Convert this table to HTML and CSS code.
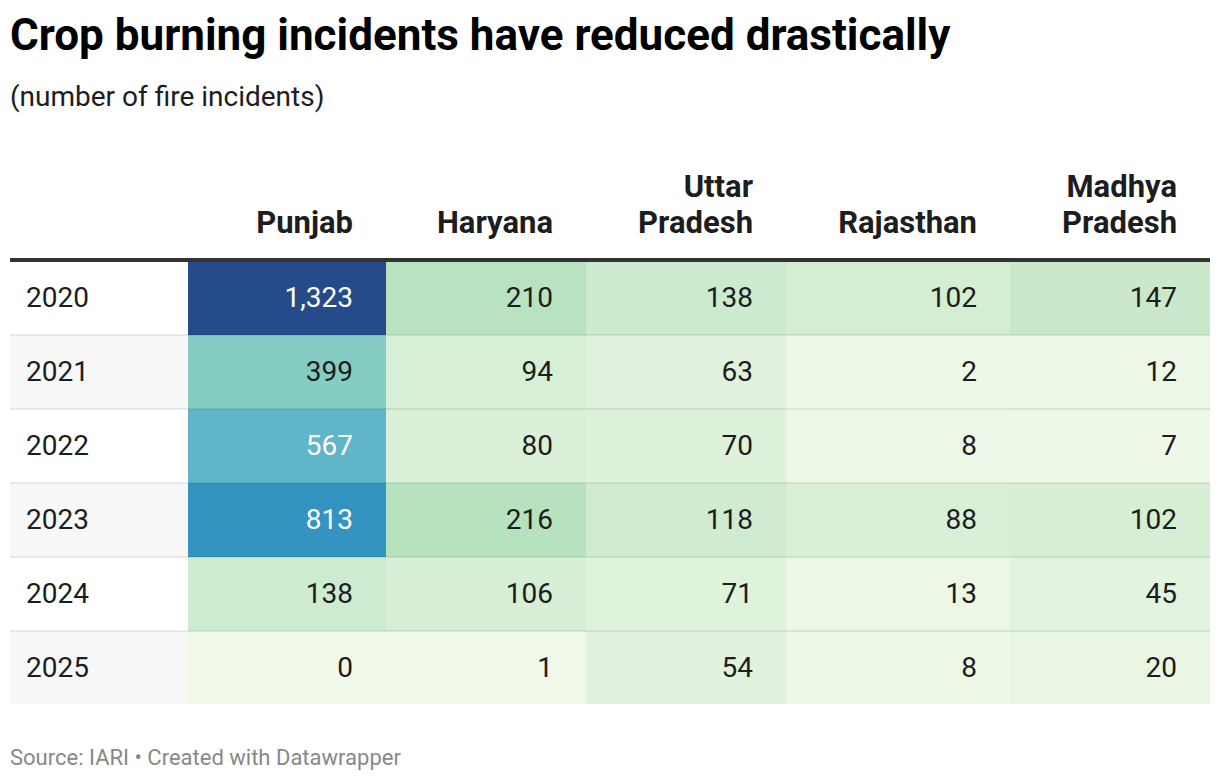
FILE: index.html
```html
<!DOCTYPE html>
<html lang="en">
<head>
<meta charset="utf-8">
<title>Crop burning incidents have reduced drastically</title>
<link rel="stylesheet" href="styles.css">
</head>
<body>
<div class="chart">
  <h1 class="title">Crop burning incidents have reduced drastically</h1>
  <p class="subtitle">(number of fire incidents)</p>
  <table class="tbl">
    <colgroup>
      <col class="c-year"><col class="c-pb"><col class="c-hr"><col class="c-up"><col class="c-rj"><col class="c-mp">
    </colgroup>
    <thead>
      <tr>
        <th class="h-year"></th>
        <th>Punjab</th>
        <th>Haryana</th>
        <th>Uttar<br>Pradesh</th>
        <th>Rajasthan</th>
        <th>Madhya<br>Pradesh</th>
      </tr>
    </thead>
    <tbody>
      <tr>
        <td class="year">2020</td>
        <td class="num light" style="background:#264b8b">1,323</td>
        <td class="num" style="background:#b9e3c0">210</td>
        <td class="num" style="background:#cceacf">138</td>
        <td class="num" style="background:#d4eed4">102</td>
        <td class="num" style="background:#c9e8cc">147</td>
      </tr>
      <tr class="alt">
        <td class="year">2021</td>
        <td class="num" style="background:#85cdc2">399</td>
        <td class="num" style="background:#d6efd6">94</td>
        <td class="num" style="background:#e0f2dd">63</td>
        <td class="num" style="background:#eef8e8">2</td>
        <td class="num" style="background:#ecf7e6">12</td>
      </tr>
      <tr>
        <td class="year">2022</td>
        <td class="num light" style="background:#60b5c8">567</td>
        <td class="num" style="background:#daf0d9">80</td>
        <td class="num" style="background:#def2db">70</td>
        <td class="num" style="background:#edf7e7">8</td>
        <td class="num" style="background:#eef8e8">7</td>
      </tr>
      <tr class="alt">
        <td class="year">2023</td>
        <td class="num light" style="background:#3593c2">813</td>
        <td class="num" style="background:#b6e2be">216</td>
        <td class="num" style="background:#cfebd2">118</td>
        <td class="num" style="background:#d9efd7">88</td>
        <td class="num" style="background:#d5eed4">102</td>
      </tr>
      <tr>
        <td class="year">2024</td>
        <td class="num" style="background:#cdebd0">138</td>
        <td class="num" style="background:#d5eed5">106</td>
        <td class="num" style="background:#dff2dc">71</td>
        <td class="num" style="background:#ecf7e5">13</td>
        <td class="num" style="background:#e2f3df">45</td>
      </tr>
      <tr class="alt last">
        <td class="year">2025</td>
        <td class="num" style="background:#eff8e9">0</td>
        <td class="num" style="background:#eff8e9">1</td>
        <td class="num" style="background:#e1f3de">54</td>
        <td class="num" style="background:#ecf7e5">8</td>
        <td class="num" style="background:#e9f6e3">20</td>
      </tr>
    </tbody>
  </table>
  <p class="footer">Source: IARI • Created with Datawrapper</p>
</div>
</body>
</html>
```

FILE: styles.css
```css
html, body {
  margin: 0;
  padding: 0;
  background: #ffffff;
}

body {
  font-family: Roboto, "Liberation Sans", Arial, sans-serif;
  color: #1d1d1d;
}

.chart {
  padding: 9px 10px 0 10px;
  width: 1200px;
}

.title {
  margin: 0;
  font-size: 44px;
  line-height: 52px;
  font-weight: 700;
  color: #000;
}

.subtitle {
  margin: 19px 0 0 0;
  font-size: 28px;
  line-height: 34px;
  color: #1d1d1d;
}

.tbl {
  margin-top: 55px;
  width: 1200px;
  border-collapse: collapse;
  table-layout: fixed;
}

.c-year { width: 178px; }
.c-pb { width: 198px; }
.c-hr { width: 200px; }
.c-up { width: 200px; }
.c-rj { width: 224px; }
.c-mp { width: 200px; }

.tbl th {
  font-size: 31px;
  line-height: 36px;
  font-weight: 700;
  text-align: right;
  vertical-align: bottom;
  padding: 0 33px 17px 0;
  border-bottom: 4px solid #333333;
  color: #1d1d1d;
}

.tbl td {
  height: 72px;
  padding: 0 33px 0 0;
  font-size: 28px;
  line-height: 32px;
  border-bottom: 2px solid rgba(0, 0, 0, 0.075);
  vertical-align: middle;
  box-sizing: content-box;
}

.tbl td.year {
  text-align: left;
  padding-left: 16px;
  background: #ffffff;
}

.tbl tr.alt td.year {
  background: #f7f7f7;
}

.tbl tr.last td {
  border-bottom: none;
}

.tbl td.num {
  text-align: right;
}

.tbl td.light {
  color: #ffffff;
}

.footer {
  margin: 41px 0 0 0;
  font-size: 22px;
  line-height: 26px;
  color: #888888;
}
```
